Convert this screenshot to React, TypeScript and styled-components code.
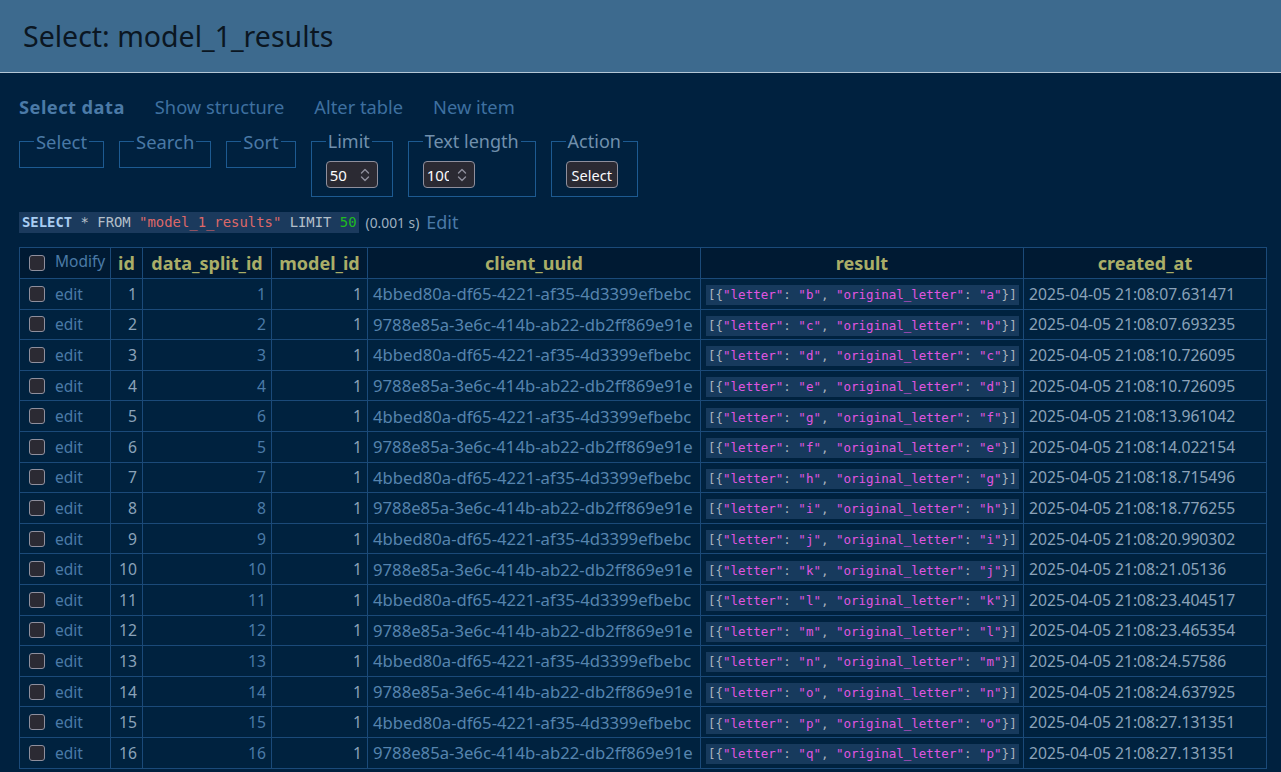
import React from "react";
import styled, { createGlobalStyle } from "styled-components";

const Global = createGlobalStyle`
  html, body { margin: 0; padding: 0; }
  body {
    background: #00213f;
    font-family: "Noto Sans", "Open Sans", sans-serif;
    font-size: 17px;
    color: #8ba2b9;
  }
`;

const Header = styled.h2`
  margin: 0;
  height: 72px;
  display: flex;
  align-items: center;
  padding-left: 23px;
  background: #3d6a8e;
  border-bottom: 1px solid #b4c6d5;
  color: #0b1622;
  font-weight: normal;
  font-size: 28.5px;
`;

const Content = styled.div`
  padding: 0 15px 0 19px;
`;

const Nav = styled.nav`
  display: flex;
  gap: 30px;
  margin-top: 22px;
  line-height: 24px;
  font-size: 18.3px;
`;

const NavLink = styled.a<{ $active?: boolean }>`
  color: ${(p) => (p.$active ? "#4b7aa7" : "#3e70a0")};
  font-weight: ${(p) => (p.$active ? "bold" : "normal")};
  letter-spacing: ${(p) => (p.$active ? "0.45px" : "0")};
  text-decoration: none;
`;

const Form = styled.div`
  display: flex;
  align-items: flex-start;
  gap: 15px;
  margin-top: 11px;
`;

const Fieldset = styled.fieldset<{ $filled?: boolean }>`
  margin: 0;
  border: 1px solid #1d5a91;
  padding: 6px 14px 8px;
  min-height: ${(p) => (p.$filled ? "0" : "13px")};
`;

const Legend = styled.legend<{ $filled?: boolean }>`
  padding: 0 2px;
  color: ${(p) => (p.$filled ? "#7190ad" : "#4a79a6")};
  font-size: ${(p) => (p.$filled ? "18px" : "18.4px")};
  line-height: 23px;
`;

const Spin = styled.div`
  display: flex;
  align-items: center;
  box-sizing: border-box;
  width: 52px;
  height: 27px;
  background: #2b2a33;
  border: 1px solid #8f8f9d;
  border-radius: 4px;
  color: #fbfbfe;
  font-size: 15px;
  padding-left: 3px;
  margin-top: 2px;
`;

const SpinValue = styled.span`
  width: 22px;
  overflow: hidden;
  white-space: nowrap;
  flex: none;
`;

const SpinIcon = styled.svg`
  flex: none;
  margin-left: 8px;
`;

const Button = styled.button`
  height: 27px;
  margin-top: 2px;
  background: #2b2a33;
  border: 1px solid #8f8f9d;
  border-radius: 4px;
  color: #fbfbfe;
  font-family: "Noto Sans", sans-serif;
  font-size: 14.5px;
  padding: 0 5px;
`;

const SqlLine = styled.p`
  margin: 13px 0 0;
  display: flex;
  align-items: center;
  gap: 7px;
  height: 24px;
`;

const Code = styled.code`
  font-family: "DejaVu Sans Mono", monospace;
  font-size: 13.9px;
  background: #1b3a5d;
  color: #b4bfc9;
  padding: 1px 2px 1px 3px;
  line-height: 19px;
`;

const Kw = styled.b`
  color: #a9cdf2;
`;
const Str = styled.span`
  color: #de6868;
`;
const Num = styled.span`
  color: #1fba1f;
`;

const Time = styled.span`
  font-size: 13.8px;
  color: #9fb0c0;
`;

const EditLink = styled.a`
  color: #4b7aa7;
  text-decoration: none;
  font-size: 18px;
`;

const Table = styled.table`
  margin-top: 13px;
  border-collapse: collapse;
  table-layout: fixed;
  width: 1247px;
`;

const Th = styled.th<{ $left?: boolean }>`
  background: #001a33;
  border: 1px solid #1b4a79;
  color: #aaae68;
  font-weight: bold;
  font-size: 18px;
  text-align: ${(p) => (p.$left ? "left" : "center")};
  height: 30px;
  padding: 0 5px;
  white-space: nowrap;
  overflow: hidden;
`;

const Td = styled.td<{ $align?: string; $color?: string; $size?: number }>`
  background: #00223f;
  border: 1px solid #1b4a79;
  height: 29.6px;
  padding: 0 5px;
  text-align: ${(p) => p.$align ?? "left"};
  color: ${(p) => p.$color ?? "#8ba2b9"};
  font-size: ${(p) => p.$size ?? 15.7}px;
  white-space: nowrap;
  overflow: hidden;
`;

const CheckCell = styled.div`
  display: flex;
  align-items: center;
  gap: 10px;
  padding-left: 4px;
`;

const Check = styled.span`
  display: inline-block;
  width: 14px;
  height: 14px;
  background: #2b2a33;
  border: 1px solid #8f8f9d;
  border-radius: 3px;
  flex: none;
`;

const RowLink = styled.a<{ $raised?: boolean }>`
  color: #4b7aa7;
  text-decoration: none;
  font-weight: normal;
  font-size: 15.5px;
  position: relative;
  top: ${(p) => (p.$raised ? "-2px" : "0")};
`;

const Json = styled.code`
  font-family: "DejaVu Sans Mono", monospace;
  font-size: 12.5px;
  background: #173a5d;
  color: #a9b3bd;
  padding: 2px 2px;
  line-height: 16px;
  display: inline-block;
`;

const JStr = styled.span`
  color: #e055e0;
`;

const rows = [
  [1, 1, "4bbed80a-df65-4221-af35-4d3399efbebc", "b", "a", "21:08:07.631471"],
  [2, 2, "9788e85a-3e6c-414b-ab22-db2ff869e91e", "c", "b", "21:08:07.693235"],
  [3, 3, "4bbed80a-df65-4221-af35-4d3399efbebc", "d", "c", "21:08:10.726095"],
  [4, 4, "9788e85a-3e6c-414b-ab22-db2ff869e91e", "e", "d", "21:08:10.726095"],
  [5, 6, "4bbed80a-df65-4221-af35-4d3399efbebc", "g", "f", "21:08:13.961042"],
  [6, 5, "9788e85a-3e6c-414b-ab22-db2ff869e91e", "f", "e", "21:08:14.022154"],
  [7, 7, "4bbed80a-df65-4221-af35-4d3399efbebc", "h", "g", "21:08:18.715496"],
  [8, 8, "9788e85a-3e6c-414b-ab22-db2ff869e91e", "i", "h", "21:08:18.776255"],
  [9, 9, "4bbed80a-df65-4221-af35-4d3399efbebc", "j", "i", "21:08:20.990302"],
  [10, 10, "9788e85a-3e6c-414b-ab22-db2ff869e91e", "k", "j", "21:08:21.05136"],
  [11, 11, "4bbed80a-df65-4221-af35-4d3399efbebc", "l", "k", "21:08:23.404517"],
  [12, 12, "9788e85a-3e6c-414b-ab22-db2ff869e91e", "m", "l", "21:08:23.465354"],
  [13, 13, "4bbed80a-df65-4221-af35-4d3399efbebc", "n", "m", "21:08:24.57586"],
  [14, 14, "9788e85a-3e6c-414b-ab22-db2ff869e91e", "o", "n", "21:08:24.637925"],
  [15, 15, "4bbed80a-df65-4221-af35-4d3399efbebc", "p", "o", "21:08:27.131351"],
  [16, 16, "9788e85a-3e6c-414b-ab22-db2ff869e91e", "q", "p", "21:08:27.131351"],
] as const;

const SpinArrows = () => (
  <SpinIcon width="10" height="16" viewBox="0 0 10 16" fill="none" stroke="#8f8f9d" strokeWidth="1.4" strokeLinecap="round" strokeLinejoin="round">
    <path d="M1.5 6 L5 2.5 L8.5 6" />
    <path d="M1.5 10 L5 13.5 L8.5 10" />
  </SpinIcon>
);

export default function App() {
  return (
    <>
      <Global />
      <Header>Select: model_1_results</Header>
      <Content>
        <Nav>
          <NavLink $active href="#">Select data</NavLink>
          <NavLink href="#">Show structure</NavLink>
          <NavLink href="#">Alter table</NavLink>
          <NavLink href="#">New item</NavLink>
        </Nav>
        <Form>
          <Fieldset><Legend>Select</Legend></Fieldset>
          <Fieldset><Legend>Search</Legend></Fieldset>
          <Fieldset><Legend>Sort</Legend></Fieldset>
          <Fieldset $filled>
            <Legend $filled>Limit</Legend>
            <Spin><SpinValue>50</SpinValue><SpinArrows /></Spin>
          </Fieldset>
          <Fieldset $filled>
            <Legend $filled>Text length</Legend>
            <Spin><SpinValue>100</SpinValue><SpinArrows /></Spin>
          </Fieldset>
          <Fieldset $filled>
            <Legend $filled>Action</Legend>
            <Button>Select</Button>
          </Fieldset>
        </Form>
        <SqlLine>
          <Code>
            <Kw>SELECT</Kw> * FROM <Str>"model_1_results"</Str> LIMIT <Num>50</Num>
          </Code>
          <Time>(0.001 s)</Time>
          <EditLink href="#">Edit</EditLink>
        </SqlLine>
        <Table>
          <colgroup>
            <col style={{ width: 91 }} />
            <col style={{ width: 32 }} />
            <col style={{ width: 129 }} />
            <col style={{ width: 96 }} />
            <col style={{ width: 333 }} />
            <col style={{ width: 323 }} />
            <col style={{ width: 243 }} />
          </colgroup>
          <thead>
            <tr>
              <Th $left>
                <CheckCell>
                  <Check />
                  <RowLink $raised href="#">Modify</RowLink>
                </CheckCell>
              </Th>
              <Th>id</Th>
              <Th>data_split_id</Th>
              <Th>model_id</Th>
              <Th>client_uuid</Th>
              <Th>result</Th>
              <Th>created_at</Th>
            </tr>
          </thead>
          <tbody>
            {rows.map(([id, split, uuid, letter, orig, time]) => (
              <tr key={id}>
                <Td>
                  <CheckCell>
                    <Check />
                    <RowLink href="#">edit</RowLink>
                  </CheckCell>
                </Td>
                <Td $align="right">{id}</Td>
                <Td $align="right" $color="#4b7aa7">{split}</Td>
                <Td $align="right">1</Td>
                <Td $color="#5684ae" $size={16.7}>{uuid}</Td>
                <Td>
                  <Json>
                    [{"{"}<JStr>"letter"</JStr>: <JStr>"{letter}"</JStr>, <JStr>"original_letter"</JStr>: <JStr>"{orig}"</JStr>{"}"}]
                  </Json>
                </Td>
                <Td>2025-04-05 {time}</Td>
              </tr>
            ))}
          </tbody>
        </Table>
      </Content>
    </>
  );
}
